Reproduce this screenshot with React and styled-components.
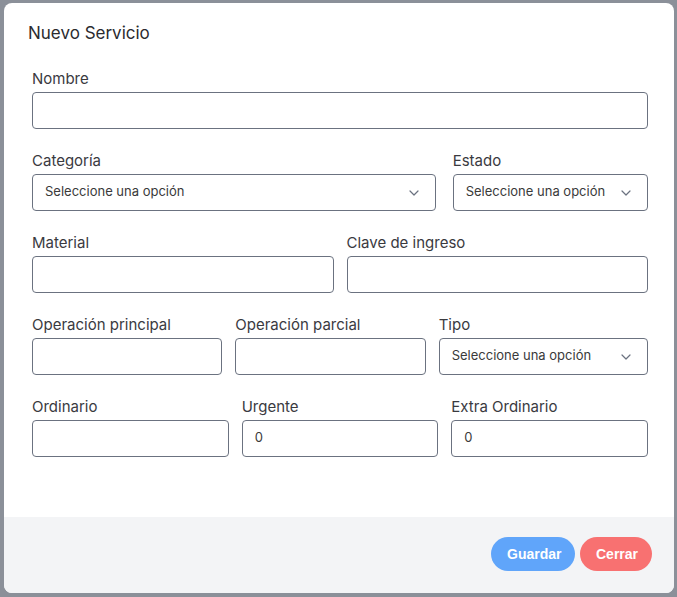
import React from 'react'
import styled, { createGlobalStyle } from 'styled-components'

const Global = createGlobalStyle`
    html, body {
        margin: 0;
        padding: 0;
        background: #8b9099;
        font-family: Inter, "Open Sans", sans-serif;
    }
    * { box-sizing: border-box; }
`

const Overlay = styled.div`
    width: 677px;
    height: 597px;
    padding: 3px 3px 4px 4px;
    background: #8b9099;
`

const Modal = styled.div`
    width: 670px;
    height: 590px;
    background: #fff;
    border-radius: 8px;
    overflow: hidden;
    display: flex;
    flex-direction: column;
`

const Body = styled.div`
    flex: 1;
    padding: 19px 26px 0 24px;
`

const Title = styled.h3`
    margin: 0 0 25px 0;
    font-size: 17px;
    font-weight: 400;
    color: #2b2b2f;
    line-height: 22px;
`

const Form = styled.div`
    padding: 0 0 0 4px;
    display: flex;
    flex-direction: column;
    gap: 22px;
`

const Row = styled.div`
    display: grid;
    grid-template-columns: ${p => p.$cols};
    gap: ${p => p.$gap || 13}px;
`

const Field = styled.div`
    display: flex;
    flex-direction: column;
`

const Label = styled.label`
    font-size: 15px;
    color: #3a3a3f;
    line-height: 19px;
    margin-bottom: 4px;
`

const Input = styled.div`
    height: 37px;
    border: 1px solid #6b7280;
    border-radius: 4px;
    display: flex;
    align-items: center;
    justify-content: space-between;
    padding: 0 16px 3px ${p => p.$pad || 12}px;
    font-size: 13px;
    color: #3a3a3a;
`

const Footer = styled.div`
    height: 76px;
    background: #f3f4f6;
    display: flex;
    justify-content: flex-end;
    align-items: center;
    gap: 5px;
    padding: 0 22px 2px 0;
`

const Button = styled.button`
    height: 34px;
    border: none;
    border-radius: 17px;
    padding: 0 16px;
    background: ${p => p.$bg};
    color: #fff;
    font-family: "Liberation Sans", Arial, sans-serif;
    font-weight: 700;
    font-size: 14px;
    width: ${p => p.$w}px;
`

const Chevron = () => (
    <svg width="10" height="6" viewBox="0 0 10 6" fill="none" style={{ marginTop: 3 }}>
        <path d="M1 1l4 4 4-4" stroke="#6b7280" strokeWidth="1.2" strokeLinecap="round" strokeLinejoin="round" />
    </svg>
)

const Select = ({ text, pad }) => (
    <Input $pad={pad}>
        <span>{text}</span>
        <Chevron />
    </Input>
)

const App = () => {
    return (
        <Overlay>
            <Global />
            <Modal>
                <Body>
                    <Title>Nuevo Servicio</Title>
                    <Form>
                        <Field>
                            <Label>Nombre</Label>
                            <Input />
                        </Field>
                        <Row $cols="403fr 195fr" $gap={17}>
                            <Field>
                                <Label>Categoría</Label>
                                <Select text="Seleccione una opción" />
                            </Field>
                            <Field>
                                <Label>Estado</Label>
                                <Select text="Seleccione una opción" />
                            </Field>
                        </Row>
                        <Row $cols="1fr 1fr">
                            <Field>
                                <Label>Material</Label>
                                <Input />
                            </Field>
                            <Field>
                                <Label>Clave de ingreso</Label>
                                <Input />
                            </Field>
                        </Row>
                        <Row $cols="190fr 190fr 209fr">
                            <Field>
                                <Label>Operación principal</Label>
                                <Input />
                            </Field>
                            <Field>
                                <Label>Operación parcial</Label>
                                <Input />
                            </Field>
                            <Field>
                                <Label>Tipo</Label>
                                <Select text="Seleccione una opción" />
                            </Field>
                        </Row>
                        <Row $cols="1fr 1fr 1fr">
                            <Field>
                                <Label>Ordinario</Label>
                                <Input />
                            </Field>
                            <Field>
                                <Label>Urgente</Label>
                                <Input>0</Input>
                            </Field>
                            <Field>
                                <Label>Extra Ordinario</Label>
                                <Input>0</Input>
                            </Field>
                        </Row>
                    </Form>
                </Body>
                <Footer>
                    <Button $bg="#60a5fa" $w={84}>Guardar</Button>
                    <Button $bg="#f87171" $w={72}>Cerrar</Button>
                </Footer>
            </Modal>
        </Overlay>
    )
}

export default App
